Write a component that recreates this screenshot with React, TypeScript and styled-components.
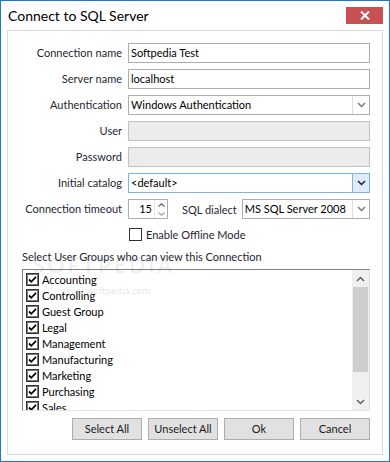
import React from "react";
import styled, { createGlobalStyle } from "styled-components";

const GlobalStyle = createGlobalStyle`
  html, body { margin: 0; padding: 0; background: #ffffff; }
  body {
    font-family: Lato, "Liberation Sans", sans-serif;
    font-size: 11px;
    color: #262633;
  }
  * { box-sizing: border-box; }
`;

const Window = styled.div`
  position: relative;
  width: 390px;
  height: 462px;
  border: 1px solid #1979ca;
  background: #ffffff;
  display: flex;
  flex-direction: column;
`;

const TitleBar = styled.div`
  height: 29px;
  flex: none;
  display: flex;
  align-items: flex-start;
  justify-content: space-between;
  padding: 0 6px 0 7px;
`;

const Title = styled.div`
  font-size: 14px;
  line-height: 18px;
  padding-top: 6px;
  color: #000000;
`;

const CloseButton = styled.div`
  width: 37px;
  height: 17px;
  margin-top: 6px;
  background: #c75050;
  display: flex;
  align-items: center;
  justify-content: center;
`;

const Panel = styled.div`
  flex: 1;
  margin: 0 6px 6px 6px;
  border: 1px solid #dadada;
  padding: 12px 12px 0 14px;
  display: flex;
  flex-direction: column;
`;

const FormGrid = styled.div`
  display: grid;
  grid-template-columns: 100px minmax(0, 1fr);
  grid-auto-rows: 20px;
  column-gap: 6px;
  row-gap: 6px;
`;

const Label = styled.div`
  text-align: right;
  line-height: 20px;
  white-space: nowrap;
`;

const Field = styled.div<{ $disabled?: boolean }>`
  height: 20px;
  border: 1px solid ${p => (p.$disabled ? "#c2c2c2" : "#adadad")};
  background: ${p => (p.$disabled ? "#ececec" : "#ffffff")};
  padding: 0 2px;
  line-height: 18px;
  color: #000000;
  white-space: nowrap;
  overflow: hidden;
`;

const Select = styled.div<{ $focused?: boolean }>`
  flex: 1;
  min-width: 0;
  height: 20px;
  border: 1px solid ${p => (p.$focused ? "#7eb4ea" : "#adadad")};
  background: #ffffff;
  display: flex;
  color: #000000;
`;

const SelectText = styled.div`
  flex: 1;
  min-width: 0;
  padding: 0 2px;
  line-height: 18px;
  white-space: nowrap;
  overflow: hidden;
`;

const DropButton = styled.div<{ $focused?: boolean }>`
  width: 17px;
  flex: none;
  border-left: 1px solid ${p => (p.$focused ? "#7eb4ea" : "#dcdcdc")};
  background: ${p => (p.$focused ? "#dcecfc" : "#ffffff")};
  display: flex;
  align-items: center;
  justify-content: center;
`;

const InlineRow = styled.div`
  display: flex;
  align-items: center;
  min-width: 0;
`;

const Spinner = styled.div`
  width: 40px;
  height: 20px;
  flex: none;
  border: 1px solid #adadad;
  display: flex;
  color: #000000;
`;

const SpinValue = styled.div`
  flex: 1;
  text-align: right;
  line-height: 18px;
  padding-right: 2px;
`;

const SpinButtons = styled.div`
  width: 13px;
  display: flex;
  flex-direction: column;
  border-left: 1px solid #e6e6e6;
`;

const SpinHalf = styled.div`
  flex: 1;
  display: flex;
  align-items: center;
  justify-content: center;
`;

const InlineLabel = styled.div`
  margin: 0 5px 0 14px;
  white-space: nowrap;
`;

const CheckRow = styled.div`
  grid-column: 2;
  display: flex;
  align-items: center;
  gap: 4px;
  padding-left: 1px;
  margin-top: -2px;
`;

const CheckBox = styled.div`
  width: 13px;
  height: 13px;
  flex: none;
  border: 1px solid #333333;
  background: #ffffff;
`;

const GroupCaption = styled.div`
  margin-top: 4px;
  line-height: 16px;
`;

const ListBox = styled.div`
  margin-top: 4px;
  height: 142px;
  border-top: 1px solid #828282;
  border-left: 1px solid #828282;
  border-right: 1px solid #e3e3e3;
  border-bottom: 1px solid #e3e3e3;
  display: flex;
`;

const Items = styled.div`
  flex: 1;
  overflow: hidden;
  padding: 1px 0 0 3px;
`;

const Item = styled.div`
  height: 16px;
  display: flex;
  align-items: center;
  gap: 3px;
  color: #000000;
  white-space: nowrap;
`;

const ScrollBar = styled.div`
  width: 17px;
  background: #f0f0f0;
  display: flex;
  flex-direction: column;
`;

const ScrollArrow = styled.div`
  height: 17px;
  flex: none;
  display: flex;
  align-items: center;
  justify-content: center;
`;

const ScrollThumb = styled.div`
  height: 85px;
  flex: none;
  margin: 0 1px;
  background: #cdcdcd;
`;

const ScrollTrack = styled.div`
  flex: 1;
`;

const ButtonRow = styled.div`
  margin-top: 7px;
  display: flex;
  justify-content: flex-end;
  gap: 6px;
`;

const Button = styled.div`
  width: 70px;
  height: 22px;
  border: 1px solid #adadad;
  background: #e1e1e1;
  color: #1a1a1a;
  line-height: 20px;
  text-align: center;
`;

const Watermark = styled.div`
  position: absolute;
  left: 32px;
  top: 251px;
  font-size: 21px;
  font-weight: 700;
  letter-spacing: 3px;
  color: rgba(0, 0, 0, 0.07);
  pointer-events: none;
`;

const WatermarkUrl = styled.div`
  position: absolute;
  left: 62px;
  top: 283px;
  font-size: 10px;
  color: rgba(0, 0, 0, 0.13);
  pointer-events: none;
`;

const Chevron = ({ up, color = "#7a7a7a" }: { up?: boolean; color?: string }) => (
  <svg width="9" height="6" viewBox="0 0 9 6">
    <path
      d={up ? "M1 5 L4.5 1.5 L8 5" : "M1 1 L4.5 4.5 L8 1"}
      fill="none"
      stroke={color}
      strokeWidth="1.5"
    />
  </svg>
);

const SmallChevron = ({ up, color }: { up?: boolean; color: string }) => (
  <svg width="7" height="4" viewBox="0 0 7 4">
    <path
      d={up ? "M0.5 3.5 L3.5 0.8 L6.5 3.5" : "M0.5 0.5 L3.5 3.2 L6.5 0.5"}
      fill="none"
      stroke={color}
      strokeWidth="1.2"
    />
  </svg>
);

const CheckedBox = () => (
  <svg width="13" height="13" viewBox="0 0 13 13">
    <rect x="0.5" y="0.5" width="12" height="12" fill="#ffffff" stroke="#333333" />
    <rect x="1.5" y="1.5" width="10" height="10" fill="none" stroke="#7a7a7a" />
    <path d="M3 6.5 L5.3 8.8 L10 3.8" fill="none" stroke="#000000" strokeWidth="1.8" />
  </svg>
);

const groups = [
  "Accounting",
  "Controlling",
  "Guest Group",
  "Legal",
  "Management",
  "Manufacturing",
  "Marketing",
  "Purchasing",
  "Sales",
];

export default function App() {
  return (
    <>
      <GlobalStyle />
      <Window>
        <TitleBar>
          <Title>Connect to SQL Server</Title>
          <CloseButton>
            <svg width="10" height="9" viewBox="0 0 10 9">
              <path d="M1 0.5 L9 8.5 M9 0.5 L1 8.5" stroke="#ffffff" strokeWidth="2" />
            </svg>
          </CloseButton>
        </TitleBar>
        <Panel>
          <FormGrid>
            <Label>Connection name</Label>
            <Field>Softpedia Test</Field>
            <Label>Server name</Label>
            <Field>localhost</Field>
            <Label>Authentication</Label>
            <Select>
              <SelectText>Windows Authentication</SelectText>
              <DropButton><Chevron /></DropButton>
            </Select>
            <Label>User</Label>
            <Field $disabled />
            <Label>Password</Label>
            <Field $disabled />
            <Label>Initial catalog</Label>
            <Select $focused>
              <SelectText>&lt;default&gt;</SelectText>
              <DropButton $focused><Chevron color="#1e1e1e" /></DropButton>
            </Select>
            <Label>Connection timeout</Label>
            <InlineRow>
              <Spinner>
                <SpinValue>15</SpinValue>
                <SpinButtons>
                  <SpinHalf><SmallChevron up color="#606060" /></SpinHalf>
                  <SpinHalf><SmallChevron color="#a0a0a0" /></SpinHalf>
                </SpinButtons>
              </Spinner>
              <InlineLabel>SQL dialect</InlineLabel>
              <Select>
                <SelectText>MS SQL Server 2008</SelectText>
                <DropButton><Chevron /></DropButton>
              </Select>
            </InlineRow>
            <CheckRow>
              <CheckBox />
              <span>Enable Offline Mode</span>
            </CheckRow>
          </FormGrid>
          <GroupCaption>Select User Groups who can view this Connection</GroupCaption>
          <ListBox>
            <Items>
              {groups.map(g => (
                <Item key={g}>
                  <CheckedBox />
                  <span>{g}</span>
                </Item>
              ))}
            </Items>
            <ScrollBar>
              <ScrollArrow><Chevron up color="#606060" /></ScrollArrow>
              <ScrollThumb />
              <ScrollTrack />
              <ScrollArrow><Chevron color="#606060" /></ScrollArrow>
            </ScrollBar>
          </ListBox>
          <ButtonRow>
            <Button>Select All</Button>
            <Button>Unselect All</Button>
            <Button>Ok</Button>
            <Button>Cancel</Button>
          </ButtonRow>
        </Panel>
        <Watermark>SOFTPEDIA</Watermark>
        <WatermarkUrl>www.softpedia.com</WatermarkUrl>
      </Window>
    </>
  );
}
